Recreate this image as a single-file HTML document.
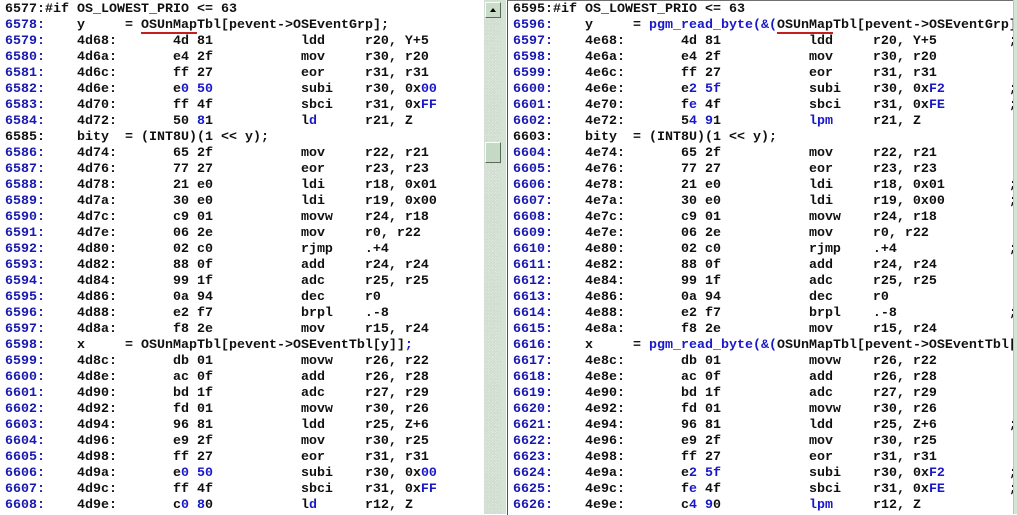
<!DOCTYPE html>
<html><head><meta charset="utf-8"><style>
html,body{margin:0;padding:0;width:1017px;height:514px;overflow:hidden;background:#fff;}
.pane{position:absolute;top:0;height:514px;overflow:hidden;background:#fff;}
pre{margin:0;font-family:"Liberation Mono",monospace;font-weight:bold;font-size:13.33px;line-height:16px;color:#101010;white-space:pre;}
.n{color:#1818b0;}
.b{color:#1818c8;}
.u{position:relative;}
.u:after{content:"";position:absolute;left:0;right:0;bottom:-1px;height:2px;background:#c02020;}
#lp{left:0;width:484px;}
#lp pre{padding:2px 0 0 5px;}
#rp{left:507px;width:506px;border-top:1px solid #707070;border-left:1px solid #555;}
#rp pre{padding:1px 0 0 5px;}
.sb{position:absolute;left:484px;top:0;width:17px;height:514px;background-color:#e4ece4;
background-image:repeating-linear-gradient(45deg,#cfdccf 0 1px,transparent 1px 2px),repeating-linear-gradient(-45deg,#cfdccf 0 1px,transparent 1px 2px);}
.btn{position:absolute;left:485px;top:2px;width:14px;height:14px;background:#c8dcc8;border:1px solid;border-color:#f4fff4 #5a6a5a #5a6a5a #f4fff4;}
.btn:after{content:"";position:absolute;left:4px;top:5px;border-left:3px solid transparent;border-right:3px solid transparent;border-bottom:4px solid #000;}
.thumb{position:absolute;left:485px;top:142px;width:14px;height:19px;background:#c4dac4;border:1px solid;border-color:#f4fff4 #5a6a5a #5a6a5a #f4fff4;}
.gb{position:absolute;left:501px;top:0;width:5px;height:514px;background:#d4e4d4;}
.rb{position:absolute;left:1013px;top:0;width:4px;height:514px;background:#d4e4d4;border-left:1px solid #b8c8b8;}
</style></head><body>
<div class="pane" id="lp"><pre><span>6577:#if OS_LOWEST_PRIO &lt;= 63</span>
<span class="n">6578:</span>    y     = <span class="u">OSUnMap</span>Tbl[pevent-&gt;OSEventGrp];
<span class="n">6579:</span>    4d68:       4d 81           ldd     r20, Y+5
<span class="n">6580:</span>    4d6a:       e4 2f           mov     r30, r20
<span class="n">6581:</span>    4d6c:       ff 27           eor     r31, r31
<span class="n">6582:</span>    4d6e:       e<span class="b">0 50</span>           subi    r30, 0x<span class="b">00</span>
<span class="n">6583:</span>    4d70:       ff 4f           sbci    r31, 0x<span class="b">FF</span>
<span class="n">6584:</span>    4d72:       50 <span class="b">8</span>1           l<span class="b">d</span>      r21, Z
6585:    bity  = (INT8U)(1 &lt;&lt; y);
<span class="n">6586:</span>    4d74:       65 2f           mov     r22, r21
<span class="n">6587:</span>    4d76:       77 27           eor     r23, r23
<span class="n">6588:</span>    4d78:       21 e0           ldi     r18, 0x01
<span class="n">6589:</span>    4d7a:       30 e0           ldi     r19, 0x00
<span class="n">6590:</span>    4d7c:       c9 01           movw    r24, r18
<span class="n">6591:</span>    4d7e:       06 2e           mov     r0, r22
<span class="n">6592:</span>    4d80:       02 c0           rjmp    .+4
<span class="n">6593:</span>    4d82:       88 0f           add     r24, r24
<span class="n">6594:</span>    4d84:       99 1f           adc     r25, r25
<span class="n">6595:</span>    4d86:       0a 94           dec     r0
<span class="n">6596:</span>    4d88:       e2 f7           brpl    .-8
<span class="n">6597:</span>    4d8a:       f8 2e           mov     r15, r24
<span class="n">6598:</span>    x     = OSUnMapTbl[pevent-&gt;OSEventTbl[y]]<span class="b">;</span>
<span class="n">6599:</span>    4d8c:       db 01           movw    r26, r22
<span class="n">6600:</span>    4d8e:       ac 0f           add     r26, r28
<span class="n">6601:</span>    4d90:       bd 1f           adc     r27, r29
<span class="n">6602:</span>    4d92:       fd 01           movw    r30, r26
<span class="n">6603:</span>    4d94:       96 81           ldd     r25, Z+6
<span class="n">6604:</span>    4d96:       e9 2f           mov     r30, r25
<span class="n">6605:</span>    4d98:       ff 27           eor     r31, r31
<span class="n">6606:</span>    4d9a:       e<span class="b">0 50</span>           subi    r30, 0x<span class="b">00</span>
<span class="n">6607:</span>    4d9c:       ff 4f           sbci    r31, 0x<span class="b">FF</span>
<span class="n">6608:</span>    4d9e:       c<span class="b">0 8</span>0           l<span class="b">d</span>      r12, Z</pre></div>
<div class="sb"></div><div class="btn"></div><div class="thumb"></div><div class="gb"></div>
<div class="pane" id="rp"><pre>6595:#if OS_LOWEST_PRIO &lt;= 63
<span class="n">6596:</span>    y     = <span class="b">pgm_read_byte(&amp;(</span><span class="u">OSUnMap</span>Tbl[pevent-&gt;OSEventGrp]));
<span class="n">6597:</span>    4e68:       4d 81           ldd     r20, Y+5         ;
<span class="n">6598:</span>    4e6a:       e4 2f           mov     r30, r20
<span class="n">6599:</span>    4e6c:       ff 27           eor     r31, r31
<span class="n">6600:</span>    4e6e:       e<span class="b">2 5f</span>           subi    r30, 0x<span class="b">F2</span>        ;
<span class="n">6601:</span>    4e70:       f<span class="b">e</span> 4f           sbci    r31, 0x<span class="b">FE</span>        ;
<span class="n">6602:</span>    4e72:       5<span class="b">4 9</span>1           <span class="b">lpm</span>     r21, Z
6603:    bity  = (INT8U)(1 &lt;&lt; y);
<span class="n">6604:</span>    4e74:       65 2f           mov     r22, r21
<span class="n">6605:</span>    4e76:       77 27           eor     r23, r23
<span class="n">6606:</span>    4e78:       21 e0           ldi     r18, 0x01        ;
<span class="n">6607:</span>    4e7a:       30 e0           ldi     r19, 0x00        ;
<span class="n">6608:</span>    4e7c:       c9 01           movw    r24, r18
<span class="n">6609:</span>    4e7e:       06 2e           mov     r0, r22
<span class="n">6610:</span>    4e80:       02 c0           rjmp    .+4              ;
<span class="n">6611:</span>    4e82:       88 0f           add     r24, r24
<span class="n">6612:</span>    4e84:       99 1f           adc     r25, r25
<span class="n">6613:</span>    4e86:       0a 94           dec     r0
<span class="n">6614:</span>    4e88:       e2 f7           brpl    .-8              ;
<span class="n">6615:</span>    4e8a:       f8 2e           mov     r15, r24
<span class="n">6616:</span>    x     = <span class="b">pgm_read_byte(&amp;(</span>OSUnMapTbl[pevent-&gt;OSEventTbl[y]]));
<span class="n">6617:</span>    4e8c:       db 01           movw    r26, r22
<span class="n">6618:</span>    4e8e:       ac 0f           add     r26, r28
<span class="n">6619:</span>    4e90:       bd 1f           adc     r27, r29
<span class="n">6620:</span>    4e92:       fd 01           movw    r30, r26
<span class="n">6621:</span>    4e94:       96 81           ldd     r25, Z+6         ;
<span class="n">6622:</span>    4e96:       e9 2f           mov     r30, r25
<span class="n">6623:</span>    4e98:       ff 27           eor     r31, r31
<span class="n">6624:</span>    4e9a:       e<span class="b">2 5f</span>           subi    r30, 0x<span class="b">F2</span>        ;
<span class="n">6625:</span>    4e9c:       f<span class="b">e</span> 4f           sbci    r31, 0x<span class="b">FE</span>        ;
<span class="n">6626:</span>    4e9e:       c<span class="b">4 9</span>0           <span class="b">lpm</span>     r12, Z</pre></div>
<div class="rb"></div>
</body></html>
